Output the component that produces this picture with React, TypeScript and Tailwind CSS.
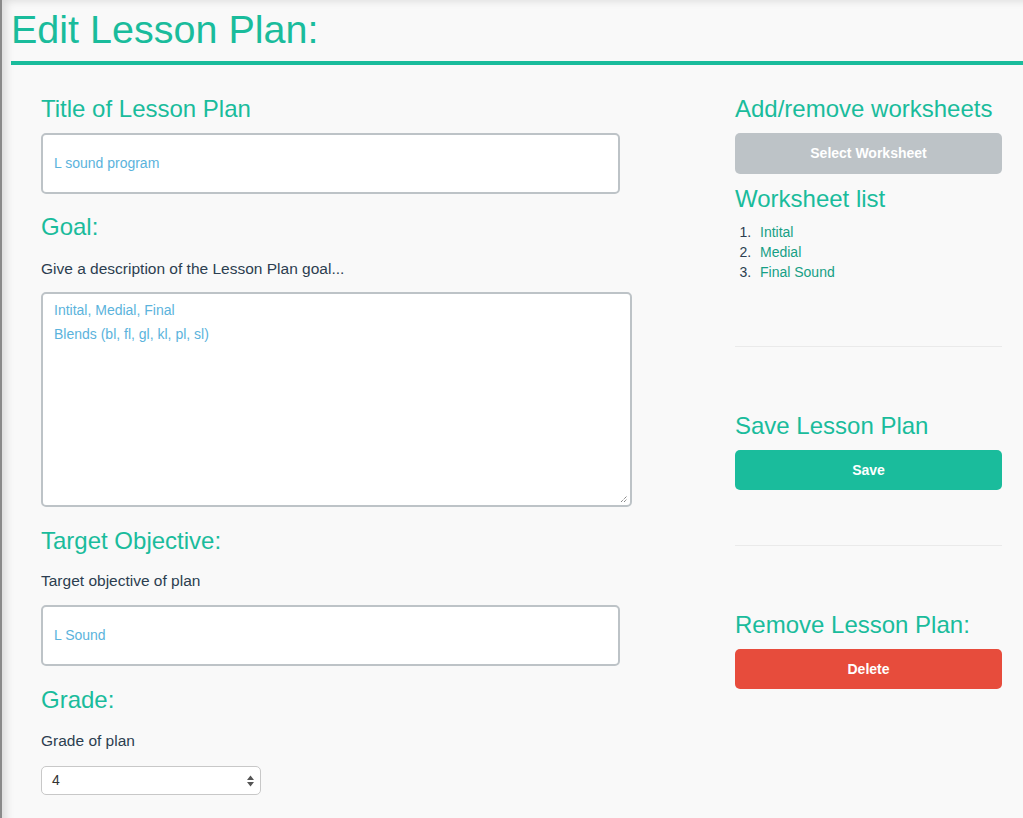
const worksheets = ['Intital', 'Medial', 'Final Sound']

function Heading({ children }: { children: React.ReactNode }) {
  return <h3 className="text-[24px] leading-[28px] text-[#1abc9c]">{children}</h3>
}

function TextBox({ value }: { value: string }) {
  return (
    <div className="flex h-[61px] w-[579px] items-center rounded-[5px] border-2 border-[#bdc3c7] bg-white px-[11px] text-[14px] text-[#5bb3dc]">
      {value}
    </div>
  )
}

export default function App() {
  return (
    <div className="min-h-screen border-l-2 border-[#8a8a8a] bg-[#f9f9f9] font-['Liberation_Sans',Arial,sans-serif] text-[#2c3e50] shadow-[inset_8px_5px_8px_-4px_rgba(0,0,0,0.12)]">
      <div className="pl-[9px] pt-[7px]">
        <h1 className="text-[39.5px] font-light leading-[44px] text-[#1abc9c]">Edit Lesson Plan:</h1>
        <div className="mt-[10px] h-[4px] bg-[#1abc9c]" />
      </div>

      <div className="flex pl-[39px] pt-[30px]">
        <div className="w-[694px]">
          <Heading>Title of Lesson Plan</Heading>
          <div className="mt-[10px]">
            <TextBox value="L sound program" />
          </div>

          <div className="mt-[19px]">
            <Heading>Goal:</Heading>
          </div>
          <p className="mt-[18px] text-[15.5px] leading-[20px]">Give a description of the Lesson Plan goal...</p>
          <div className="relative mt-[13px] h-[215px] w-[591px] rounded-[5px] border-2 border-[#bdc3c7] bg-white px-[11px] pt-[4px] text-[14px] leading-[24px] text-[#5bb3dc]">
            <div>Intital, Medial, Final</div>
            <div>Blends (bl, fl, gl, kl, pl, sl)</div>
            <svg className="absolute bottom-[2px] right-[2px]" width="8" height="8" viewBox="0 0 8 8">
              <path d="M1 7 L7 1 M4 7 L7 4" stroke="#555" strokeWidth="1" strokeDasharray="1 1" />
            </svg>
          </div>

          <div className="mt-[20px]">
            <Heading>Target Objective:</Heading>
          </div>
          <p className="mt-[16px] text-[15.5px] leading-[20px]">Target objective of plan</p>
          <div className="mt-[14px]">
            <TextBox value="L Sound" />
          </div>

          <div className="mt-[20px]">
            <Heading>Grade:</Heading>
          </div>
          <p className="mt-[17px] text-[15.5px] leading-[20px]">Grade of plan</p>
          <div className="mt-[15px] flex h-[29px] w-[220px] items-center justify-between rounded-[5px] border border-[#c8c8c8] bg-white pl-[10px] pr-[6px] text-[14px] text-[#333]">
            <span>4</span>
            <svg width="7" height="12" viewBox="0 0 7 12">
              <path d="M3.5 0.5 L7 5 L0 5 Z M0 7 L7 7 L3.5 11.5 Z" fill="#555" />
            </svg>
          </div>
        </div>

        <div className="w-[267px]">
          <Heading>Add/remove worksheets</Heading>
          <button className="mt-[10px] h-[41px] w-full rounded-[5px] bg-[#bdc3c7] text-[14px] font-bold text-white">
            Select Worksheet
          </button>
          <div className="mt-[11px]">
            <Heading>Worksheet list</Heading>
          </div>
          <ol className="mt-[9px] list-decimal pl-[20px] text-[14px] leading-[20px] marker:text-[#2c3e50]">
            {worksheets.map((w) => (
              <li key={w} className="pl-[5px] text-[#16a085]">
                {w}
              </li>
            ))}
          </ol>
          <hr className="mt-[64px] border-t border-[#eaeaea]" />

          <div className="mt-[65px]">
            <Heading>Save Lesson Plan</Heading>
          </div>
          <button className="mt-[10px] h-[40px] w-full rounded-[5px] bg-[#1abc9c] text-[14px] font-bold text-white">
            Save
          </button>
          <hr className="mt-[55px] border-t border-[#eaeaea]" />

          <div className="mt-[65px]">
            <Heading>Remove Lesson Plan:</Heading>
          </div>
          <button className="mt-[10px] h-[40px] w-full rounded-[5px] bg-[#e74c3c] text-[14px] font-bold text-white">
            Delete
          </button>
        </div>
      </div>
    </div>
  )
}
